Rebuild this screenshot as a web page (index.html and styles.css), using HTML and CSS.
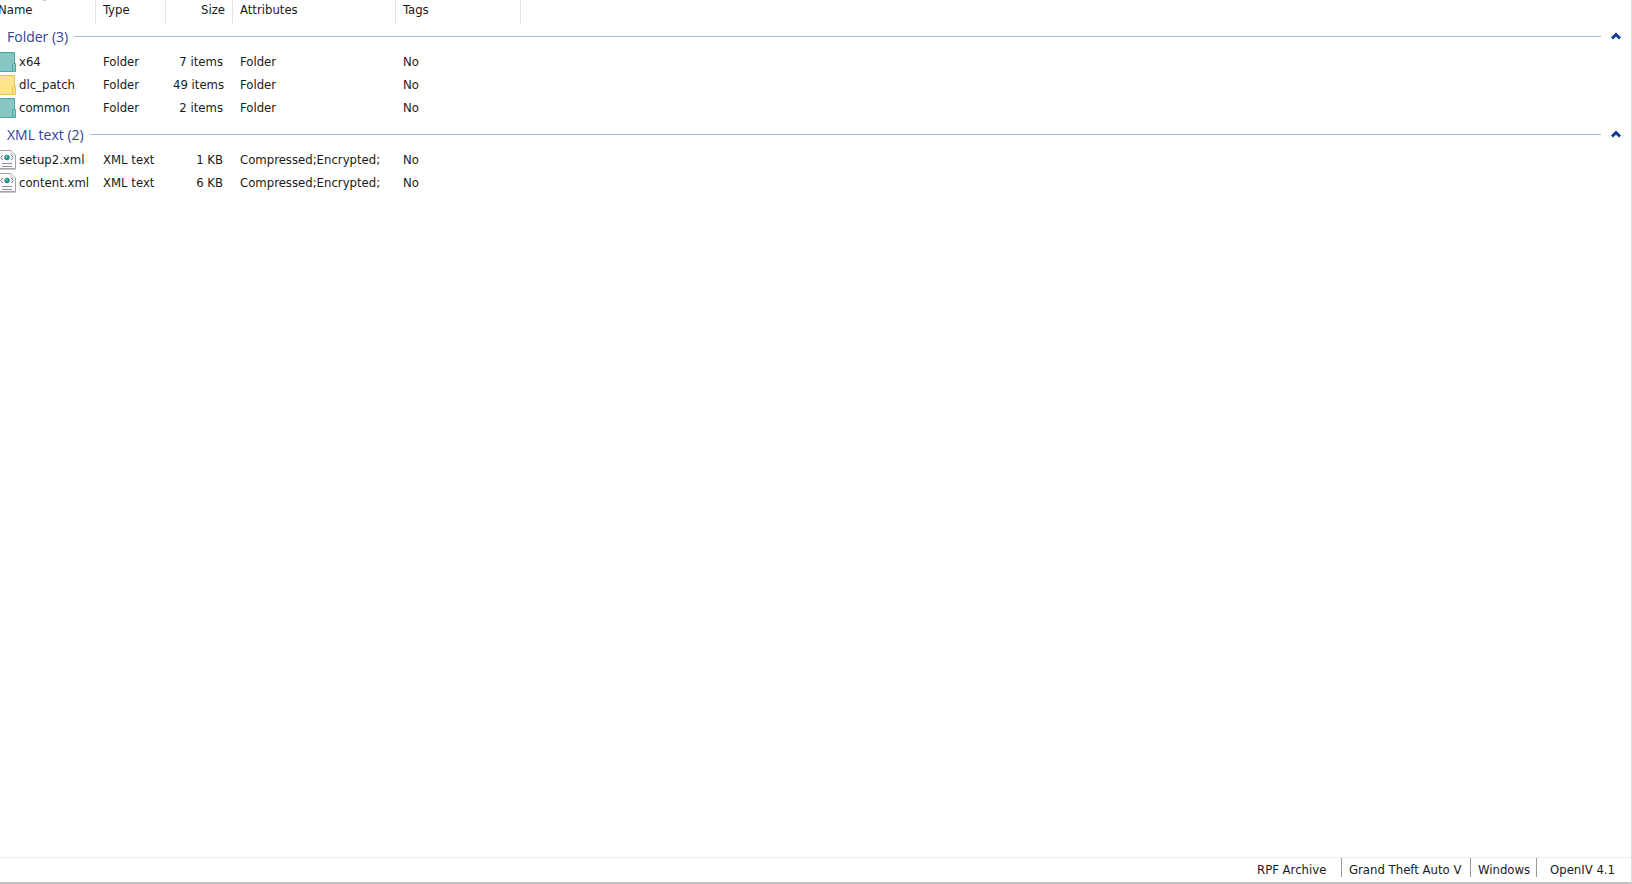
FILE: index.html
```
<!DOCTYPE html>
<html lang="en">
<head>
	<meta charset="utf-8">
	<title>OpenIV</title>
	<link rel="stylesheet" href="styles.css">
</head>
<body>
	<!-- shared icons -->
	<svg class="defs" aria-hidden="true">
		<symbol id="folder" viewBox="0 0 16 20">
			<path d="M-4 .5H14.5V19.500H-4z" fill="var(--face)" stroke="var(--edge)"/>
			<path d="M12.500 19.500V12.500L13.500 11.500H15.500V19.500z" fill="var(--face)" stroke="var(--edge)"/>
		</symbol>
		<symbol id="xml" viewBox="0 0 16 20">
			<path d="M-3 .5H11L15.500 5V18.500H-3z" fill="#fbfbfb" stroke="#a3a3a3"/>
			<path d="M-3 19.500H15.500" stroke="#c4c4c4"/>
			<path d="M11 .5V5H15.500" fill="#eee" stroke="#ccc"/>
			<path d="M2.800 5L.8 7.500L2.800 10M11.200 5L13.200 7.500L11.200 10" fill="none" stroke="#747b8e"/>
			<circle cx="7" cy="7.500" r="2.700" fill="#258f8c"/>
			<circle cx="6.500" cy="6.700" r="1" fill="#7fd6c4"/>
			<path d="M2 13.500H12M2 16.500H12" stroke="#8f8fa4"/>
		</symbol>
		<symbol id="up" viewBox="0 0 10 8">
			<path d="M1 6.500L5 2.500L9 6.500" fill="none" stroke="#0b3a9c" stroke-width="3"/>
		</symbol>
	</svg>

	<main class="list">
		<table class="files">
			<colgroup>
				<col class="c-name"><col class="c-type"><col class="c-size"><col class="c-attr"><col class="c-tags"><col>
			</colgroup>
			<thead>
				<tr>
					<th class="name sorted">Name</th>
					<th>Type</th>
					<th class="size">Size</th>
					<th>Attributes</th>
					<th>Tags</th>
					<td></td>
				</tr>
			</thead>
			<tbody>
				<tr>
					<th colspan="6" class="group"><div class="group-bar">
						<span>Folder (3)</span><i class="line"></i>
						<button type="button" aria-label="Collapse Folder"><svg class="arrow"><use href="#up"/></svg></button>
					</div></th>
				</tr>
				<tr>
					<td class="name"><div class="item"><svg class="icon teal"><use href="#folder"/></svg>x64</div></td>
					<td>Folder</td><td class="size">7 items</td><td>Folder</td><td>No</td><td></td>
				</tr>
				<tr>
					<td class="name"><div class="item"><svg class="icon yellow"><use href="#folder"/></svg>dlc_patch</div></td>
					<td>Folder</td><td class="size">49 items</td><td>Folder</td><td>No</td><td></td>
				</tr>
				<tr>
					<td class="name"><div class="item"><svg class="icon teal"><use href="#folder"/></svg>common</div></td>
					<td>Folder</td><td class="size">2 items</td><td>Folder</td><td>No</td><td></td>
				</tr>
			</tbody>
			<tbody class="next">
				<tr>
					<th colspan="6" class="group"><div class="group-bar">
						<span>XML text (2)</span><i class="line"></i>
						<button type="button" aria-label="Collapse XML text"><svg class="arrow"><use href="#up"/></svg></button>
					</div></th>
				</tr>
				<tr>
					<td class="name"><div class="item"><svg class="icon"><use href="#xml"/></svg>setup2.xml</div></td>
					<td>XML text</td><td class="size">1 KB</td><td>Compressed;Encrypted;</td><td>No</td><td></td>
				</tr>
				<tr>
					<td class="name"><div class="item"><svg class="icon"><use href="#xml"/></svg>content.xml</div></td>
					<td>XML text</td><td class="size">6 KB</td><td>Compressed;Encrypted;</td><td>No</td><td></td>
				</tr>
			</tbody>
		</table>
	</main>

	<footer class="status">
		<span class="archive">RPF Archive</span>
		<span class="game">Grand Theft Auto V</span>
		<span class="platform">Windows</span>
		<span class="version">OpenIV 4.1</span>
	</footer>
</body>
</html>
```
FILE: styles.css
```
* {
	box-sizing: border-box;
}
body {
	margin: 0;
	min-height: 100vh;
	display: flex;
	flex-direction: column;
	background: #fff;
	border-right: 1px solid #dcdcde;
	border-bottom: 2px solid #bfc0c8;
	color: #1a1a1a;
	font-family: "DejaVu Sans Condensed", Tahoma, sans-serif;
	font-size: 13px;
}
.defs {
	display: none;
}
.list {
	flex: 1;
}

/* file table */
.files {
	width: 100%;
	table-layout: fixed;
	border-collapse: separate;
	border-spacing: 0;
}
.c-name { width: 96px; }
.c-type { width: 70px; }
.c-size { width: 67px; }
.c-attr { width: 163px; }
.c-tags { width: 125px; }
.files td,
.files th {
	padding: 0 7px;
	text-align: left;
	font-weight: normal;
	white-space: nowrap;
}
.files tbody td {
	height: 23px;
	line-height: 22px;
}
.files thead th {
	height: 24px;
	padding-bottom: 4px;
	line-height: 20px;
	border-right: 1px solid #e4e4e4;
}
.files .size {
	text-align: right;
}
.files td.size {
	padding-right: 10px;
}
.files td.name,
.files th.name {
	padding: 0;
}
.files th.name {
	padding-bottom: 4px;
	text-indent: -2px;
}
.sorted {
	background: linear-gradient(#ccc, #ccc) 43px 0 / 3px 1px no-repeat;
}
.item {
	display: flex;
	align-items: center;
	gap: 3px;
	height: 22px;
}
.icon {
	width: 16px;
	height: 20px;
	flex: none;
}
.teal {
	--face: #88c6c4;
	--edge: #4ba5a3;
}
.yellow {
	--face: #ffe489;
	--edge: #ecc14c;
}

/* group headings */
.files th.group {
	padding: 0 10px 2px 7px;
}
.files .next th.group {
	padding-top: 3px;
}
.group-bar {
	display: flex;
	align-items: center;
	height: 24px;
	color: #323f9c;
	font-family: "Open Sans", "Segoe UI", sans-serif;
	font-size: 14px;
}
.line {
	flex: 1;
	height: 1px;
	margin-left: 6px;
	background: #a6bbe6;
}
.group-bar button {
	display: flex;
	margin-left: 10px;
	padding: 0;
	border: 0;
	background: none;
}
.arrow {
	width: 10px;
	height: 8px;
}

/* status bar */
.status {
	display: flex;
	flex: none;
	justify-content: flex-end;
	height: 25px;
	padding-bottom: 5px;
	border-top: 1px solid #ececec;
}
.status span {
	height: 19px;
	padding-left: 7px;
	line-height: 24px;
	white-space: nowrap;
	border-right: 1px solid #999;
}
.status .archive {
	width: 92px;
}
.status .game {
	width: 129px;
}
.status .platform {
	width: 66px;
}
.status .version {
	width: 94px;
	padding-left: 13px;
	border-right: 0;
}
```
